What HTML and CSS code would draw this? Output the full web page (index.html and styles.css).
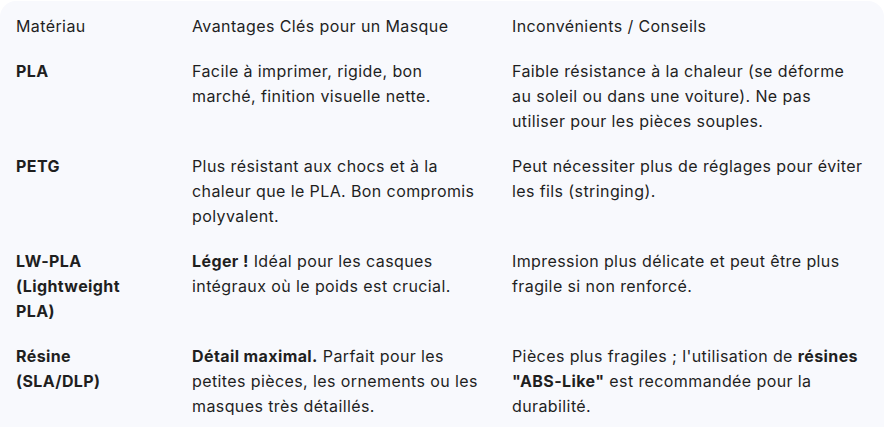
FILE: index.html
```html
<!DOCTYPE html>
<html lang="fr">
<head>
<meta charset="utf-8">
<title>Matériaux pour masques</title>
<link rel="stylesheet" href="styles.css">
</head>
<body>
<div class="panel">
  <div class="table">
    <div class="cell head">Matériau</div>
    <div class="cell head">Avantages Clés pour un Masque</div>
    <div class="cell head">Inconvénients / Conseils</div>

    <div class="cell"><b>PLA</b></div>
    <div class="cell">Facile à imprimer, rigide, bon<br>marché, finition visuelle nette.</div>
    <div class="cell">Faible résistance à la chaleur (se déforme<br>au soleil ou dans une voiture). Ne pas<br>utiliser pour les pièces souples.</div>

    <div class="cell"><b>PETG</b></div>
    <div class="cell">Plus résistant aux chocs et à la<br>chaleur que le PLA. Bon compromis<br>polyvalent.</div>
    <div class="cell">Peut nécessiter plus de réglages pour éviter<br>les fils (stringing).</div>

    <div class="cell"><b>LW-PLA<br>(Lightweight<br>PLA)</b></div>
    <div class="cell"><b>Léger !</b> Idéal pour les casques<br>intégraux où le poids est crucial.</div>
    <div class="cell">Impression plus délicate et peut être plus<br>fragile si non renforcé.</div>

    <div class="cell"><b>Résine<br>(SLA/DLP)</b></div>
    <div class="cell"><b>Détail maximal.</b> Parfait pour les<br>petites pièces, les ornements ou les<br>masques très détaillés.</div>
    <div class="cell">Pièces plus fragiles ; l'utilisation de <b>résines<br>"ABS-Like"</b> est recommandée pour la<br>durabilité.</div>
  </div>
</div>
</body>
</html>
```

FILE: styles.css
```css
html, body {
  margin: 0;
  padding: 0;
  background: #ffffff;
}

body {
  font-family: Inter, Roboto, "Noto Sans", sans-serif;
  font-size: 16px;
  line-height: 25px;
  letter-spacing: 0.4px;
  color: #1f1f1f;
}

.panel {
  margin: 1px 6px 0 0;
  padding: 3px 16px 16px 16px;
  background: #f8f9fd;
  border-radius: 16px 16px 0 0;
  min-height: 460px;
  box-sizing: border-box;
}

.table {
  display: grid;
  grid-template-columns: 160px 304px 1fr;
  column-gap: 16px;
}

.cell {
  padding: 10px 0;
  white-space: nowrap;
}

.cell b {
  font-weight: 700;
}
```
